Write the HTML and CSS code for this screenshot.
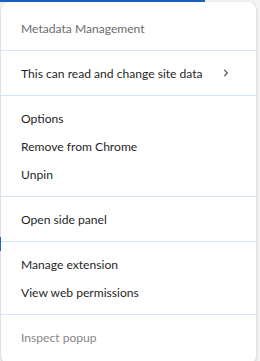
FILE: index.html
```html
<!DOCTYPE html>
<html>
<head>
<meta charset="utf-8">
<link rel="stylesheet" href="styles.css">
</head>
<body>
<div class="backdrop">
  <div class="topbar"></div>
  <div class="sidebar"></div>
</div>
<div class="menu">
  <div class="item header">Metadata Management</div>
  <div class="sep"></div>
  <div class="item sub">
    <span>This can read and change site data</span>
    <svg class="chev" width="8" height="10" viewBox="0 0 8 10"><path d="M2.2 1.8 L5.4 5 L2.2 8.2" fill="none" stroke="#555" stroke-width="1.2"/></svg>
  </div>
  <div class="sep"></div>
  <div class="item">Options</div>
  <div class="item">Remove from Chrome</div>
  <div class="item">Unpin</div>
  <div class="sep"></div>
  <div class="item">Open side panel</div>
  <div class="sep"></div>
  <div class="item">Manage extension</div>
  <div class="item">View web permissions</div>
  <div class="sep"></div>
  <div class="item disabled">Inspect popup</div>
</div>
</body>
</html>
```
FILE: styles.css
```css
html, body {
  margin: 0;
  padding: 0;
  width: 260px;
  height: 361px;
  overflow: hidden;
  background: #f3f3f3;
  font-family: "Lato", "Noto Sans", sans-serif;
}
.backdrop {
  position: absolute;
  inset: 0;
}
.topbar {
  position: absolute;
  left: 0;
  top: 0;
  width: 205px;
  height: 2px;
  background: #1b5fc4;
}
.sidebar {
  position: absolute;
  left: 0;
  top: 237px;
  width: 2px;
  height: 14px;
  background: #2f6fd0;
}
.menu {
  position: absolute;
  left: 1px;
  top: 2px;
  width: 255px;
  height: 362px;
  box-sizing: border-box;
  background: #ffffff;
  border-radius: 8px;
  box-shadow: 0 1px 3px rgba(0,0,0,0.22);
  padding: 12px 0 8px;
  display: flex;
  flex-direction: column;
}
.item {
  height: 28px;
  flex: none;
  display: flex;
  align-items: center;
  padding: 0 20px;
  font-size: 12.1px;
  color: #1f1f1f;
  white-space: nowrap;
}
.item.header {
  color: #6b6b6b;
}
.item.disabled {
  color: #8a8688;
}
.item.sub {
  justify-content: space-between;
  padding-right: 26px;
}
.sep {
  flex: none;
  height: 1px;
  background: #d3e3fd;
  margin: 8px 0;
}
```
